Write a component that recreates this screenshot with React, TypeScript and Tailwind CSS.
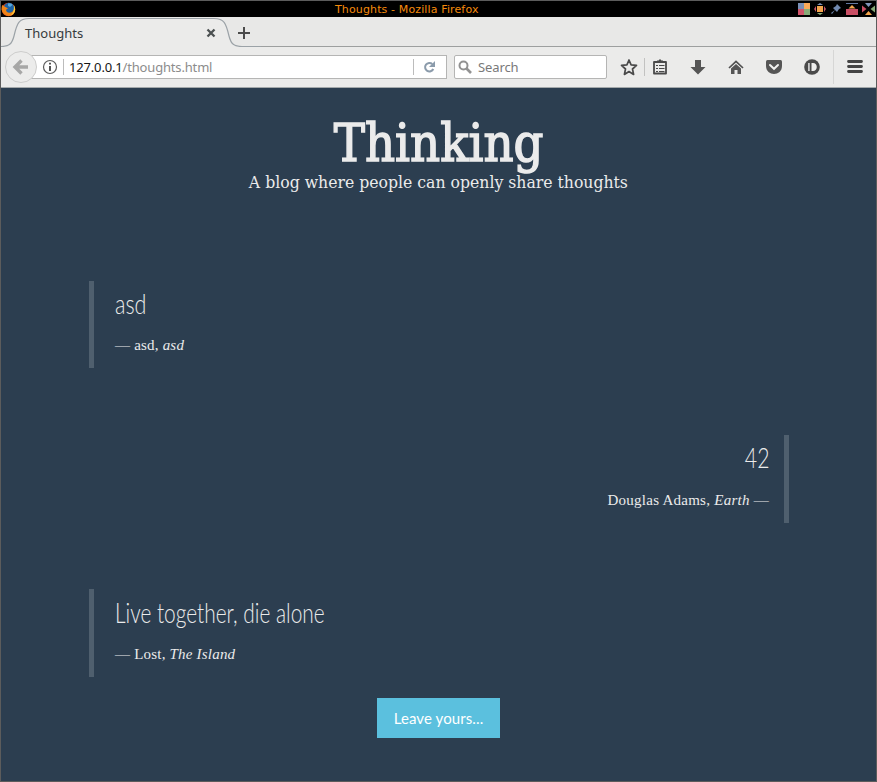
import React from "react";

function FirefoxLogo() {
  return (
    <svg width="15" height="15" viewBox="0 0 15 15">
      <circle cx="7.5" cy="7.5" r="6.8" fill="#d8451c" />
      <circle cx="8" cy="6" r="5.2" fill="#1c62a5" />
      <path d="M7 1.500c2-.8 4 .2 4.500 1.500L9 5 7 4z" fill="#54a9dc" />
      <path d="M1.200 3C.2 6 .3 9.500 3 12c3 2.800 8 2.500 10-.8 1-2 1-3 .5-5-.6 2.500-2.500 4.500-5 4.500-2.500 0-3.500-1.500-3.500-3l2-1.200L4 4.800z" fill="#f08418" />
      <path d="M12.700 2.800c1.800 2.500 2 6 .3 8.300-1 1.300-2.200 2-3.500 2.200 2.500-2 4-5 3.200-10.500z" fill="#fbcf3c" />
    </svg>
  );
}

function WindowButtons() {
  return (
    <svg width="78" height="14" viewBox="798 2 78 14">
      <path fill="#7a8fb5" d="M799 3h6v6h-6z" />
      <path fill="#fbaa5a" d="M805 3h6v6h-6z" />
      <path fill="#d0546a" d="M799 9h6v6h-6z" />
      <path fill="#86ab78" d="M805 9h6v6h-6z" />
      <path fill="#f5a54d" d="M818 6h6v6h-6z" />
      <path fill="#8295b8" d="M821 3l3 2h-6z" />
      <path fill="#86ab78" d="M821 15l3-2h-6z" />
      <path fill="#c9566a" d="M817 6v6l-2-3z" />
      <path fill="#c9566a" d="M825 6v6l2-3z" />
      <path fill="#7189b0" d="M838 4l4 4-2 1-2 3-2-2-3 4-1-1 4-3-2-2 3-2z" />
      <path fill="#6479a0" d="M847 3h12v1h-12z" />
      <path fill="#c94f65" d="M847 9h12v6h-12z" />
      <path fill="#f5a54d" d="M853 5l3.500 3.500h-7z" />
      <path fill="#8295b8" d="M866 3h7l-3.500 4z" />
      <path fill="#c94f65" d="M863 5.500l4.500 3.500-4.500 3.500z" />
      <path fill="#86ab78" d="M876 5.500L871.500 9l4.500 3.500z" />
      <path fill="#f5a54d" d="M869.500 11l3.500 4h-7z" />
    </svg>
  );
}

function Tab() {
  return (
    <div className="relative h-[30px] w-[260px] shrink-0">
      <svg className="absolute left-0 top-0" width="260" height="30" viewBox="1 17 260 30">
        <path d="M1 46.500C9 46.500 12 44 14 36c3-13 5-17.500 15-17.500h185c10 0 12 4.500 15 17.500 2 8 5 10.500 13 10.500v1H1z" fill="#ebebea" />
        <path d="M1 46.500C9 46.500 12 44 14 36c3-13 5-17.500 15-17.500h185c10 0 12 4.500 15 17.500 2 8 5 10.500 13 10.500h20" fill="none" stroke="#9ba2a7" strokeWidth="1.200" />
        <path d="M207.500 29.500l7 7M214.500 29.500l-7 7" stroke="#4b5051" strokeWidth="2.300" />
        <path d="M238 33h12M244 27v12" stroke="#4b4b4b" strokeWidth="2" />
      </svg>
      <span className="absolute left-6 top-[6px] font-['Noto_Sans',sans-serif] text-[13px] leading-[20px] text-[#363b3d]">Thoughts</span>
    </div>
  );
}

function ToolbarIcons() {
  return (
    <svg className="shrink-0" width="269" height="40" viewBox="607 47 269 40">
      <path d="M629 60l2.100 4.900 5.400.5-4 3.600 1.100 5.400-4.600-2.800-4.600 2.800 1.100-5.400-4-3.600 5.400-.5z" fill="none" stroke="#4a4a4a" strokeWidth="1.700" strokeLinejoin="round" />
      <path d="M644.500 58v18" stroke="#c2c2c1" />
      <path d="M654 62h12v11.500h-12z" fill="none" stroke="#4a4a4a" strokeWidth="1.800" strokeLinejoin="round" />
      <path d="M657 62v-1.500h1.500L660 59l1.500 1.500h1.500V62z" fill="#4a4a4a" />
      <path d="M656 65.500h2m1 0h5.500m-8.500 3h2m1 0h5.500m-8.500 3h2m1 0h5.500" stroke="#4a4a4a" strokeWidth="1.200" />
      <path d="M695 60h6v7h4.500l-7.500 7.500-7.500-7.500h4.500z" fill="#555" />
      <path d="M729 68l7-6.500 7 6.500" fill="none" stroke="#505050" strokeWidth="1.700" />
      <path d="M731 68.500l5-4.500 5 4.500V74h-3.500v-4h-3v4H731z" fill="#555" />
      <path d="M767.500 60h13q1.500 0 1.500 1.500V66c0 10.500-16 10.500-16 0v-4.500q0-1.500 1.500-1.500z" fill="#555" />
      <path d="M770 65l4 3.800 4-3.800" fill="none" stroke="#f2f2f1" strokeWidth="2" strokeLinecap="round" />
      <circle cx="812" cy="67" r="7.800" fill="#4a4a4a" />
      <path d="M808 63h1.800v8H808z" fill="#c8c8c8" />
      <path d="M811.500 63h1.500c5 0 5 8 0 8h-1.500z" fill="#eeeeed" />
      <path d="M833.500 50v34" stroke="#d6d6d5" />
      <path d="M848.500 61.500h13m-13 5h13m-13 5h13" stroke="#444" strokeWidth="2.800" strokeLinecap="round" />
    </svg>
  );
}

function NavBar() {
  return (
    <div className="flex h-[40px] items-start bg-[#ebebea] font-['Noto_Sans',sans-serif] text-[13px]">
      <div className="relative ml-[30px] mt-[8px] flex h-[24px] w-[416px] shrink-0 items-center border border-[#b5b5b4] bg-white">
        <svg className="absolute -left-[28px] -top-[6px]" width="62" height="34" viewBox="4 50 62 34">
          <circle cx="21" cy="67" r="15.500" fill="#ececeb" stroke="#cdcdcc" />
          <path d="M28 67H16M21.500 60.500L15 67l6.500 6.500" fill="none" stroke="#a7a7a6" strokeWidth="3.400" />
          <circle cx="50" cy="67" r="6.500" fill="none" stroke="#5b5b5b" strokeWidth="1.200" />
          <path d="M50 66v5M50 62.700v1.800" stroke="#4a4a4a" strokeWidth="1.900" />
          <path d="M63.500 59v16" stroke="#bcbcbc" />
        </svg>
        <div className="ml-[37px] grow whitespace-nowrap pt-px tracking-[-0.17px] text-[#8c8c8c]">
          <span className="text-[#161616]">127.0.0.1</span>/thoughts.html
        </div>
        <svg width="34" height="22" viewBox="412 56 34 22">
          <path d="M413.500 59v16" stroke="#bcbcbc" />
          <path d="M432.300 64a4.300 4.300 0 1 0 1 5" fill="none" stroke="#8b9bab" strokeWidth="2" />
          <path d="M435 61v6h-6z" fill="#8b9bab" />
        </svg>
      </div>
      <div className="ml-[7px] mt-[8px] flex h-[24px] w-[153px] shrink-0 items-center rounded-[2px] border border-[#b5b5b4] bg-white text-[#797979]">
        <svg className="ml-[3px] mr-[5px]" width="15" height="15" viewBox="0 0 15 15">
          <circle cx="5.500" cy="5.500" r="4" fill="none" stroke="#929292" strokeWidth="2" />
          <path d="M8.500 8.500l4.500 4.500" stroke="#929292" strokeWidth="2.600" />
        </svg>
        <span className="pt-px tracking-[-0.1px]">Search</span>
      </div>
      <ToolbarIcons />
    </div>
  );
}

type QuoteProps = { author: string; source: string; right?: boolean; children: React.ReactNode };

function Quote({ author, source, right, children }: QuoteProps) {
  return (
    <blockquote
      className={
        right
          ? "flex h-[88px] flex-col items-end border-r-[5px] border-[#4f5f6e] pr-[15px] pt-[5px]"
          : "flex h-[88px] flex-col items-start border-l-[5px] border-[#4f5f6e] pl-[21px] pt-[6px] first:mb-px first:h-[87px] first:pt-[5px]"
      }
    >
      <p className="h-[34px] whitespace-nowrap font-['Lato',sans-serif] text-[28px] font-light leading-[34px]">{children}</p>
      <footer
        className={
          right
            ? "mt-[16px] whitespace-nowrap font-['Liberation_Serif',serif] text-[15px] leading-[21px] tracking-[0.26px]"
            : "mt-[15px] whitespace-nowrap font-['Liberation_Serif',serif] text-[15px] leading-[21px] tracking-[0.2px]"
        }
      >
        {right ? "" : "— "}
        {author}, <cite>{source}</cite>
        {right ? " —" : ""}
      </footer>
    </blockquote>
  );
}

export default function App() {
  return (
    <div className="flex h-[782px] w-[877px] flex-col overflow-hidden border border-[#5c5c5c] bg-[#2c3e50]">
      <div className="flex h-[16px] shrink-0 items-center bg-black">
        <div className="w-[334px]"><FirefoxLogo /></div>
        <div className="w-[462px] whitespace-nowrap pt-px font-['DejaVu_Sans',sans-serif] text-[11px] leading-[16px] tracking-[0.13px] text-[#f58a0b]">Thoughts - Mozilla Firefox</div>
        <WindowButtons />
      </div>
      <div className="flex h-[30px] shrink-0 bg-[#e8e8e7]">
        <Tab />
        <div className="grow border-b border-[#9d9f9f]" />
      </div>
      <NavBar />
      <div className="h-px shrink-0 bg-[#a4a9ab]" />
      <main className="flex grow flex-col bg-[#2c3e50] text-[#ebebeb]">
        <header className="flex flex-col items-center pt-[25px]">
          <h1 className="h-[60px] origin-center scale-x-[0.9] whitespace-nowrap font-['DejaVu_Serif',serif] text-[52px] leading-[60px] [-webkit-text-stroke:1.500px_#ebebeb]">
            Thinking
          </h1>
          <p className="h-[22px] origin-center scale-x-[0.98] whitespace-nowrap font-['DejaVu_Serif',serif] text-[16px] leading-[20px]">A blog where people can openly share thoughts</p>
        </header>
        <section className="mx-[88px] mt-[86px] flex w-[700px] flex-col gap-[66px]">
          <Quote author="asd" source="asd"><span className="inline-block origin-left scale-x-[0.77]">asd</span></Quote>
          <Quote author="Douglas Adams" source="Earth" right><span className="inline-block origin-right scale-x-[0.76]">42</span></Quote>
          <Quote author="Lost" source="The Island"><span className="inline-block origin-left scale-x-[0.745]">Live together, die alone</span></Quote>
        </section>
        <button className="mt-[21px] h-[40px] w-[123px] self-center bg-[#5bc0de] font-['Lato',sans-serif] text-[15px] tracking-[0.1px] text-white">Leave yours...</button>
      </main>
    </div>
  );
}
